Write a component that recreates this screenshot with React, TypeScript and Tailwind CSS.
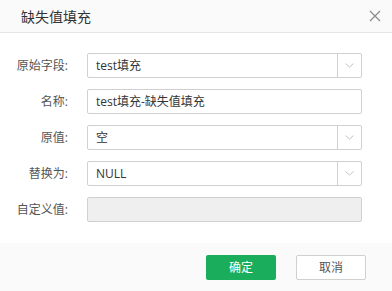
import React from "react";

const Chevron = () => (
  <svg width="9" height="5" viewBox="0 0 9 5" fill="none">
    <path d="M0.5 0.5 L4.5 4 L8.5 0.5" stroke="#c4c4c4" strokeWidth="1" />
  </svg>
);

function Row({ label, children }: { label: string; children: React.ReactNode }) {
  return (
    <div className="flex items-center h-[25px]">
      <div className="w-[70px] text-right pr-[2px] text-[12px] text-[#555]">{label}</div>
      <div className="ml-[17px] w-[275px] h-[25px]">{children}</div>
    </div>
  );
}

function Select({ value }: { value: string }) {
  return (
    <div className="flex h-full border border-[#d0d0d0] rounded-[2px] bg-white">
      <div className="flex-1 flex items-center pl-[8px] text-[12px] text-[#333]">{value}</div>
      <div className="w-[24px] border-l border-[#d0d0d0] flex items-center justify-center">
        <Chevron />
      </div>
    </div>
  );
}

export default function App() {
  return (
    <div
      className="w-[392px] h-[291px] bg-white flex flex-col"
      style={{ fontFamily: '"Open Sans", "Noto Sans CJK SC", sans-serif' }}
    >
      <div className="h-[33px] bg-[#fafafa] border-b border-[#e6e6e6] flex items-center justify-between pl-[21px] pr-[9px]">
        <span className="text-[14px] text-[#333]">缺失值填充</span>
        <svg width="12" height="12" viewBox="0 0 12 12" className="mr-[2px]">
          <path d="M1 1 L11 11 M11 1 L1 11" stroke="#8a8a8a" strokeWidth="1.2" />
        </svg>
      </div>
      <div className="flex-1 flex flex-col gap-[11px] pt-[20px]">
        <Row label="原始字段:">
          <Select value="test填充" />
        </Row>
        <Row label="名称:">
          <div className="h-full border border-[#d0d0d0] rounded-[2px] flex items-center pl-[8px] text-[12px] text-[#333]">
            test填充-缺失值填充
          </div>
        </Row>
        <Row label="原值:">
          <Select value="空" />
        </Row>
        <Row label="替换为:">
          <Select value="NULL" />
        </Row>
        <Row label="自定义值:">
          <div className="h-full border border-[#d0d0d0] rounded-[2px] bg-[#efefef]" />
        </Row>
      </div>
      <div className="h-[48px] bg-[#fafafa] flex items-start pt-[12px] pl-[206px] gap-[20px]">
        <div className="w-[70px] h-[25px] bg-[#1aad5c] rounded-[2px] flex items-center justify-center text-[12px] text-white">
          确定
        </div>
        <div className="w-[70px] h-[25px] bg-white border border-[#d0d0d0] rounded-[2px] flex items-center justify-center text-[12px] text-[#555]">
          取消
        </div>
      </div>
    </div>
  );
}
